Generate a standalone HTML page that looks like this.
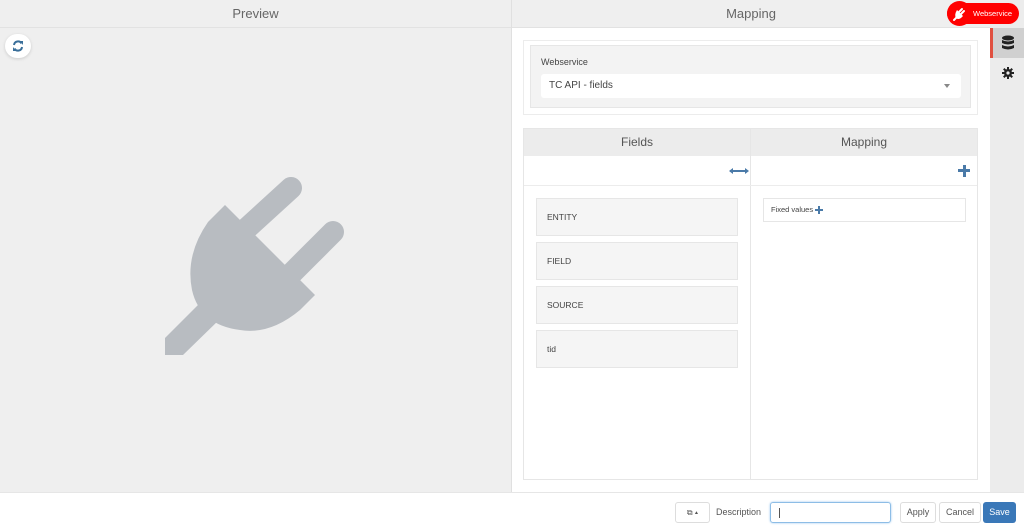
<!DOCTYPE html>
<html><head><style>
*{box-sizing:border-box;margin:0;padding:0}
body{width:1024px;height:528px;overflow:hidden;font-family:"Liberation Sans",sans-serif;background:#efefef;position:relative;color:#555}
.abs{position:absolute}
.hdr{top:0;height:28px;background:#efefef;border-bottom:1px solid #e2e2e2;text-align:center;line-height:28px;font-size:13px;color:#666}
</style></head><body>
<div class="abs hdr" style="left:0;width:511px">Preview</div>
<div class="abs" style="left:511px;top:0;width:1px;height:492px;background:#e0e0e0"></div>
<div class="abs hdr" style="left:512px;width:478px">Mapping</div>
<div class="abs" style="left:990px;top:0;width:34px;height:492px;background:#ececec"></div>
<div class="abs" style="left:947px;top:3px;width:72px;height:21px;background:#f00;border-radius:11px;color:#fff;font-size:7.5px;line-height:21px;padding-left:26px">Webservice</div>
<div class="abs" style="left:947px;top:1px;width:25px;height:25px;border-radius:50%;background:#f00"></div>
<svg class="abs" style="left:951px;top:5px" width="17" height="17" viewBox="0 0 17 17"><g fill="#fff"><path d="M6 5 L12 11 L10 13 Q7 15 5 13 Q3 10 6 5Z"/></g><g stroke="#fff" stroke-width="2" stroke-linecap="round"><line x1="8" y1="7" x2="11" y2="4"/><line x1="10" y1="9" x2="13" y2="6"/><line x1="3" y1="15" x2="6" y2="12"/></g></svg>
<div class="abs" style="left:990px;top:28px;width:34px;height:30px;background:#d0d0d0;border-left:3px solid #e05040"></div>
<svg class="abs" style="left:1001px;top:35px" width="14" height="16" viewBox="0 0 14 16"><g fill="#222"><ellipse cx="7" cy="3" rx="6" ry="2.5"/><path d="M1 5 Q7 8 13 5 V8 Q7 11 1 8Z"/><path d="M1 10 Q7 13 13 10 V13 Q7 16 1 13Z"/></g></svg>
<svg class="abs" style="left:1002px;top:67px" width="12" height="12" viewBox="0 0 12 12"><g fill="#222"><circle cx="6" cy="6" r="4"/><rect x="5" y="0" width="2" height="12"/><rect x="0" y="5" width="12" height="2"/><rect x="5" y="0" width="2" height="12" transform="rotate(45 6 6)"/><rect x="5" y="0" width="2" height="12" transform="rotate(-45 6 6)"/></g><circle cx="6" cy="6" r="1.6" fill="#ececec"/></svg>
<div class="abs" style="left:5px;top:34px;width:26px;height:24px;border-radius:12px;background:#fff;box-shadow:0 1px 3px rgba(0,0,0,.15)"></div>
<svg class="abs" style="left:12px;top:40px" width="12" height="12" viewBox="0 0 12 12"><path d="M2 5 A4 4 0 0 1 9.5 3.5 M10 7 A4 4 0 0 1 2.5 8.5" stroke="#3a6f9a" stroke-width="2" fill="none"/><path d="M8 1 L11 1 L11 5Z M4 11 L1 11 L1 7Z" fill="#3a6f9a"/></svg>
<svg class="abs" style="left:0;top:0" width="511" height="492"><g fill="#b8bcc1"><path d="M225 205 L315 295 L300 310 Q270 335 240 330 Q200 325 192 290 Q185 255 208 222Z"/><polygon points="165,338 203,300 221,318 183,355 165,355"/></g><g stroke="#b8bcc1" stroke-width="22" stroke-linecap="round"><line x1="245" y1="230" x2="291" y2="188"/><line x1="290" y1="275" x2="333" y2="232"/></g></svg>
<div class="abs" style="left:512px;top:28px;width:478px;height:464px;background:#fff"></div>
<div class="abs" style="left:523px;top:40px;width:455px;height:75px;border:1px solid #ececec;background:#fff"></div>
<div class="abs" style="left:530px;top:45px;width:441px;height:63px;background:#f3f3f3;border:1px solid #e6e6e6"></div>
<div class="abs" style="left:541px;top:57px;font-size:9px;color:#444">Webservice</div>
<div class="abs" style="left:541px;top:74px;width:420px;height:24px;background:#fff;border-radius:3px;font-size:10px;line-height:24px;padding-left:8px;color:#444">TC API - fields</div>
<div class="abs" style="left:944px;top:84px;border:3px solid transparent;border-top:4px solid #888"></div>
<div class="abs" style="left:523px;top:128px;width:455px;height:352px;border:1px solid #e6e6e6"></div>
<div class="abs" style="left:524px;top:129px;width:453px;height:27px;background:#ececec"></div>
<div class="abs" style="left:750px;top:129px;width:1px;height:351px;background:#e6e6e6"></div>
<div class="abs" style="left:524px;top:129px;width:226px;line-height:27px;text-align:center;font-size:12px;color:#555">Fields</div>
<div class="abs" style="left:751px;top:129px;width:226px;line-height:27px;text-align:center;font-size:12px;color:#555">Mapping</div>
<div class="abs" style="left:524px;top:185px;width:453px;height:1px;background:#ececec"></div>
<div class="abs" style="left:730px;top:170px;width:15px;height:2px;background:#4a7aa8"></div>
<div class="abs" style="left:730px;top:168px;border:3px solid transparent;border-right:4px solid #4a7aa8;margin-left:-4px"></div>
<div class="abs" style="left:745px;top:168px;border:3px solid transparent;border-left:4px solid #4a7aa8"></div>
<div class="abs" style="left:958px;top:169px;width:12px;height:3px;background:#4a7aa8"></div>
<div class="abs" style="left:962.5px;top:164.5px;width:3px;height:12px;background:#4a7aa8"></div>
<div class="abs" style="left:536px;top:198px;width:202px;height:38px;background:#f5f5f5;border:1px solid #e6e6e6;font-size:8.5px;line-height:36px;padding-left:10px;color:#444">ENTITY</div>
<div class="abs" style="left:536px;top:242px;width:202px;height:38px;background:#f5f5f5;border:1px solid #e6e6e6;font-size:8.5px;line-height:36px;padding-left:10px;color:#444">FIELD</div>
<div class="abs" style="left:536px;top:286px;width:202px;height:38px;background:#f5f5f5;border:1px solid #e6e6e6;font-size:8.5px;line-height:36px;padding-left:10px;color:#444">SOURCE</div>
<div class="abs" style="left:536px;top:330px;width:202px;height:38px;background:#f5f5f5;border:1px solid #e6e6e6;font-size:8.5px;line-height:36px;padding-left:10px;color:#444">tid</div>
<div class="abs" style="left:763px;top:198px;width:203px;height:24px;border:1px solid #e6e6e6;font-size:7.5px;line-height:22px;padding-left:7px;color:#444">Fixed values</div>
<div class="abs" style="left:815px;top:209px;width:8px;height:2px;background:#4a7aa8"></div>
<div class="abs" style="left:818px;top:206px;width:2px;height:8px;background:#4a7aa8"></div>
<div class="abs" style="left:0;top:492px;width:1024px;height:36px;background:#fff;border-top:1px solid #e6e6e6"></div>
<div class="abs" style="left:675px;top:502px;width:35px;height:21px;border:1px solid #ddd;border-radius:3px;font-size:8px;line-height:19px;text-align:center;color:#555">⧉ ▴</div>
<div class="abs" style="left:716px;top:502px;font-size:9px;line-height:21px;color:#555">Description</div>
<div class="abs" style="left:770px;top:502px;width:121px;height:21px;border:1px solid #8dbde6;border-radius:3px;box-shadow:0 0 2px #9cc8ee"><div style="position:absolute;left:8px;top:5px;width:1px;height:10px;background:#555"></div></div>
<div class="abs" style="left:900px;top:502px;width:36px;height:21px;border:1px solid #ddd;border-radius:3px;font-size:9px;line-height:19px;text-align:center;color:#555">Apply</div>
<div class="abs" style="left:939px;top:502px;width:42px;height:21px;border:1px solid #ddd;border-radius:3px;font-size:9px;line-height:19px;text-align:center;color:#555">Cancel</div>
<div class="abs" style="left:983px;top:502px;width:33px;height:21px;background:#3a78b8;border-radius:3px;font-size:9px;line-height:21px;text-align:center;color:#fff">Save</div>
</body></html>
